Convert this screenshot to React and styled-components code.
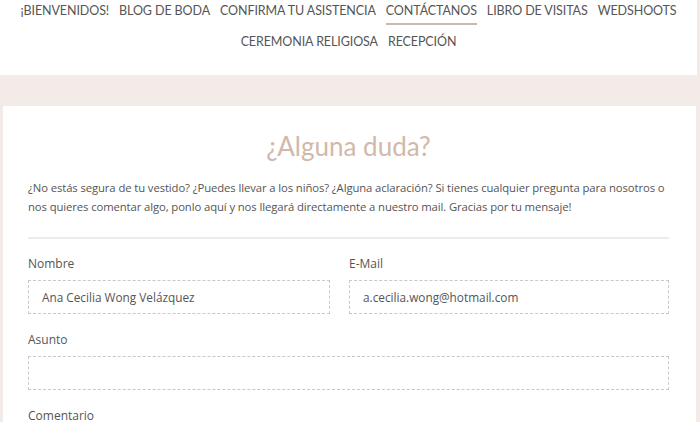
import styled, { createGlobalStyle } from "styled-components";

const GlobalStyle = createGlobalStyle`
  html, body {
    margin: 0;
    padding: 0;
    background: #f3ebe8;
  }
  body {
    font-family: "Open Sans", "Liberation Sans", sans-serif;
    overflow: hidden;
  }
`;

const Page = styled.div`
  width: 700px;
  height: 422px;
  overflow: hidden;
  background: #f3ebe8;
`;

const Header = styled.div`
  background: #ffffff;
  margin-right: 3px;
  height: 75px;
  padding-top: 2px;
  box-sizing: border-box;
`;

const NavRow = styled.div`
  display: flex;
  justify-content: center;
  gap: 10px;
  height: 31px;
  align-items: flex-start;
`;

const NavLink = styled.a`
  font-family: Lato, "Liberation Sans", sans-serif;
  font-size: 12.5px;
  color: #555555;
  white-space: nowrap;
  text-decoration: none;
  text-transform: uppercase;
  letter-spacing: -0.1px;
  line-height: 18px;
  padding-bottom: 3px;
  border-bottom: 2px solid ${props => (props.active ? "#c9b9ac" : "transparent")};
`;

const Band = styled.div`
  height: 31px;
`;

const Panel = styled.div`
  background: #ffffff;
  margin-left: 3px;
  margin-right: 4px;
  padding: 18px 27px 0 25px;
  height: 400px;
`;

const Title = styled.h2`
  margin: 0;
  text-align: center;
  font-family: Lato, "Liberation Sans", sans-serif;
  font-weight: 400;
  font-size: 26px;
  line-height: 44px;
  color: #d0b9aa;
`;

const Intro = styled.p`
  margin: 10px 0 0;
  font-size: 11.3px;
  letter-spacing: -0.1px;
  line-height: 19px;
  color: #555555;
`;

const Divider = styled.hr`
  border: none;
  height: 2px;
  background: #ececec;
  margin: 21px 0 0;
`;

const FormGrid = styled.div`
  display: grid;
  grid-template-columns: 302px 1fr;
  column-gap: 19px;
  margin-top: 17px;
`;

const Field = styled.div`
  grid-column: ${props => (props.full ? "1 / -1" : "auto")};
  margin-bottom: 18px;
`;

const Label = styled.label`
  display: block;
  font-size: 12px;
  line-height: 16px;
  color: #555555;
  margin-bottom: 8px;
`;

const Input = styled.div`
  height: 34px;
  box-sizing: border-box;
  border: 1px dashed #c8c8c8;
  padding: 0 13px;
  display: flex;
  align-items: center;
  font-size: 11.8px;
  color: #555555;
`;

export default function App() {
  const row1 = [
    { name: "¡Bienvenidos!" },
    { name: "Blog de boda" },
    { name: "Confirma tu asistencia" },
    { name: "Contáctanos", active: true },
    { name: "Libro de visitas" },
    { name: "Wedshoots" }
  ];
  const row2 = [{ name: "Ceremonia religiosa" }, { name: "Recepción" }];

  return (
    <Page>
      <GlobalStyle />
      <Header>
        <NavRow>
          {row1.map(link => (
            <NavLink key={link.name} href="#" active={link.active}>
              {link.name}
            </NavLink>
          ))}
        </NavRow>
        <NavRow>
          {row2.map(link => (
            <NavLink key={link.name} href="#">
              {link.name}
            </NavLink>
          ))}
        </NavRow>
      </Header>
      <Band />
      <Panel>
        <Title>¿Alguna duda?</Title>
        <Intro>
          ¿No estás segura de tu vestido? ¿Puedes llevar a los niños? ¿Alguna
          aclaración? Si tienes cualquier pregunta para nosotros o nos quieres
          comentar algo, ponlo aquí y nos llegará directamente a nuestro mail.
          Gracias por tu mensaje!
        </Intro>
        <Divider />
        <FormGrid>
          <Field>
            <Label>Nombre</Label>
            <Input>Ana Cecilia Wong Velázquez</Input>
          </Field>
          <Field>
            <Label>E-Mail</Label>
            <Input>a.cecilia.wong@hotmail.com</Input>
          </Field>
          <Field full>
            <Label>Asunto</Label>
            <Input />
          </Field>
          <Field full>
            <Label>Comentario</Label>
          </Field>
        </FormGrid>
      </Panel>
    </Page>
  );
}
